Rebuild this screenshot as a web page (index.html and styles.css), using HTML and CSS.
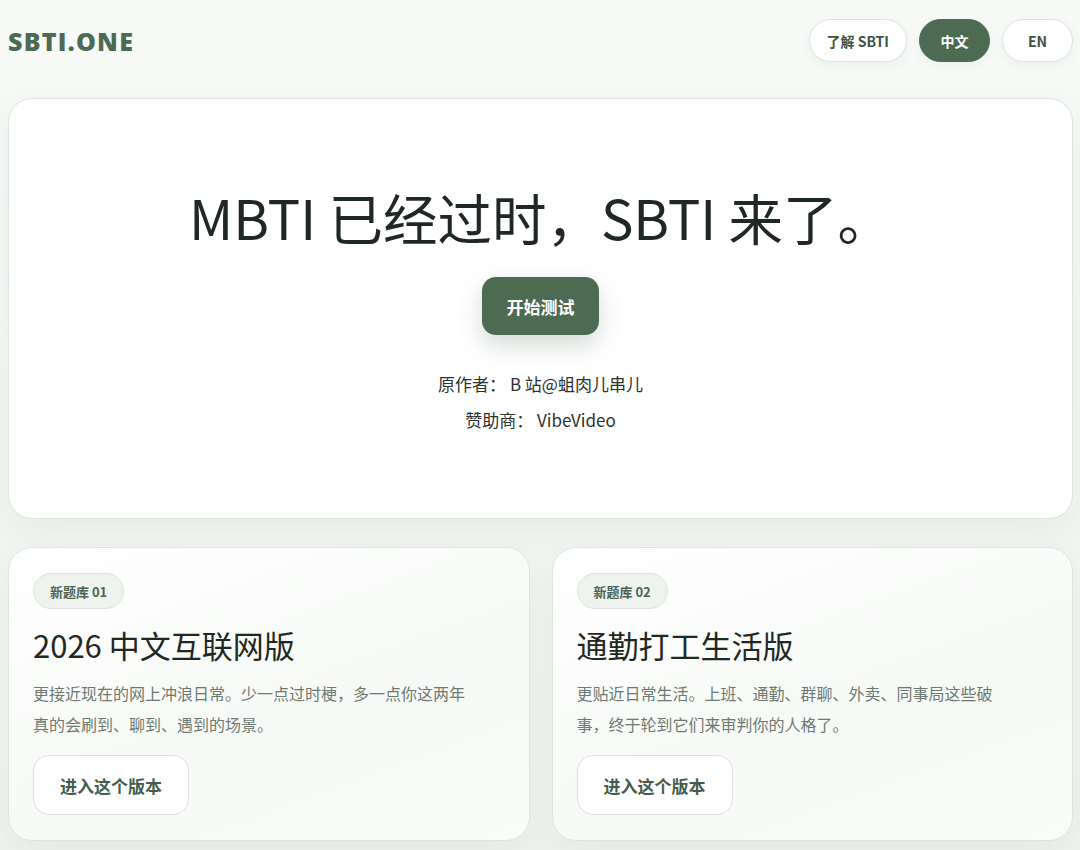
FILE: index.html
```html
<!DOCTYPE html>
<html lang="zh-CN">
<head>
    <meta charset="UTF-8">
    <meta name="viewport" content="width=device-width, initial-scale=1.0">
    <title>SBTI.ONE</title>
    <link rel="stylesheet" href="styles.css">
</head>
<body>

<div class="page">
    <!-- Top bar -->
    <header class="topbar">
        <div class="logo">SBTI.ONE</div>
        <nav class="nav">
            <a class="pill" href="#">了解 SBTI</a>
            <a class="pill active" href="#">中文</a>
            <a class="pill" href="#">EN</a>
        </nav>
    </header>

    <!-- Hero -->
    <section class="hero">
        <h1 class="hero-title">MBTI 已经过时，SBTI 来了。</h1>
        <a class="start-btn" href="#">开始测试</a>
        <div class="credits">
            <p>原作者： <span>B 站@蛆肉儿串儿</span></p>
            <p>赞助商： <span>VibeVideo</span></p>
        </div>
    </section>

    <!-- Question banks -->
    <section class="banks">
        <article class="bank">
            <span class="badge">新题库 01</span>
            <h2 class="bank-title">2026 中文互联网版</h2>
            <p class="bank-desc">更接近现在的网上冲浪日常。少一点过时梗，多一点你这两年真的会刷到、聊到、遇到的场景。</p>
            <a class="enter-btn" href="#">进入这个版本</a>
        </article>
        <article class="bank">
            <span class="badge">新题库 02</span>
            <h2 class="bank-title">通勤打工生活版</h2>
            <p class="bank-desc">更贴近日常生活。上班、通勤、群聊、外卖、同事局这些破事，终于轮到它们来审判你的人格了。</p>
            <a class="enter-btn" href="#">进入这个版本</a>
        </article>
    </section>
</div>

</body>
</html>
```

FILE: styles.css
```css
/* General styling */
body {
    margin: 0;
    padding: 0;
    min-height: 100vh;
    font-family: 'Noto Sans CJK SC', 'Noto Sans', sans-serif;
    color: rgb(31, 40, 34);
    background: linear-gradient(180deg, rgb(247, 250, 247) 0%, rgb(238, 243, 238) 100%);
}

a {
    text-decoration: none;
}

.page {
    padding: 0 7px 0 8px;
}

/* Top bar */
.topbar {
    display: flex;
    justify-content: space-between;
    align-items: center;
    padding: 19px 0 36px;
}

.logo {
    font-family: 'Open Sans', sans-serif;
    font-size: 25px;
    font-weight: 800;
    letter-spacing: 1.2px;
    color: rgb(77, 106, 83);
}

.nav {
    display: flex;
    gap: 12px;
}

.pill {
    display: flex;
    align-items: center;
    justify-content: center;
    height: 43px;
    box-sizing: border-box;
    padding: 0 17px;
    min-width: 71px;
    border: 1px solid rgb(221, 227, 221);
    border-radius: 22px;
    background-color: white;
    color: rgb(62, 82, 67);
    font-size: 14px;
    font-weight: 700;
    box-shadow: 0 4px 12px rgba(60, 90, 65, 0.05);
}

.pill.active {
    background-color: rgb(77, 106, 83);
    border-color: rgb(77, 106, 83);
    color: white;
}

/* Hero card */
.hero {
    display: flex;
    flex-direction: column;
    align-items: center;
    padding: 84px 20px 80px;
    background-color: white;
    border: 1px solid rgb(222, 229, 222);
    border-radius: 24px;
    box-shadow: 0 12px 34px rgba(60, 90, 65, 0.06);
}

.hero-title {
    margin: 0;
    font-size: 54.5px;
    font-weight: 400;
    line-height: 67px;
    color: rgb(31, 40, 34);
}

.start-btn {
    display: flex;
    align-items: center;
    justify-content: center;
    margin-top: 27px;
    width: 117px;
    height: 58px;
    border-radius: 14px;
    background-color: rgb(77, 106, 83);
    color: white;
    font-size: 17px;
    font-weight: 700;
    box-shadow: 0 10px 24px rgba(60, 90, 65, 0.22);
}

.credits {
    margin-top: 31px;
    text-align: center;
}

.credits p {
    margin: 0;
    font-size: 17px;
    line-height: 36px;
    color: rgb(43, 51, 45);
}

/* Question bank cards */
.banks {
    display: grid;
    grid-template-columns: 1fr 1fr;
    gap: 22px;
    margin-top: 28px;
}

.bank {
    display: flex;
    flex-direction: column;
    align-items: flex-start;
    padding: 25px 24px 25px;
    border: 1px solid rgb(222, 229, 222);
    border-radius: 24px;
    background: linear-gradient(160deg, rgb(255, 255, 255) 0%, rgb(246, 249, 246) 60%, rgb(250, 252, 250) 100%);
    box-shadow: 0 12px 30px rgba(60, 90, 65, 0.06);
}

.badge {
    display: inline-flex;
    align-items: center;
    height: 36px;
    box-sizing: border-box;
    padding: 0 16px;
    border: 1px solid rgb(219, 228, 219);
    border-radius: 18px;
    background-color: rgb(238, 243, 238);
    color: rgb(77, 99, 83);
    font-size: 13px;
    font-weight: 700;
}

.bank-title {
    margin: 15px 0 0;
    font-size: 31px;
    font-weight: 400;
    line-height: 42px;
    color: rgb(31, 40, 34);
}

.bank-desc {
    margin: 12px 0 0;
    max-width: 440px;
    font-size: 16px;
    line-height: 31px;
    color: rgb(110, 122, 113);
}

.enter-btn {
    display: flex;
    align-items: center;
    margin-top: 15px;
    height: 60px;
    box-sizing: border-box;
    padding: 0 26px;
    border: 1px solid rgb(221, 227, 221);
    border-radius: 16px;
    background-color: white;
    color: rgb(70, 92, 76);
    font-size: 17px;
    font-weight: 700;
}
```
